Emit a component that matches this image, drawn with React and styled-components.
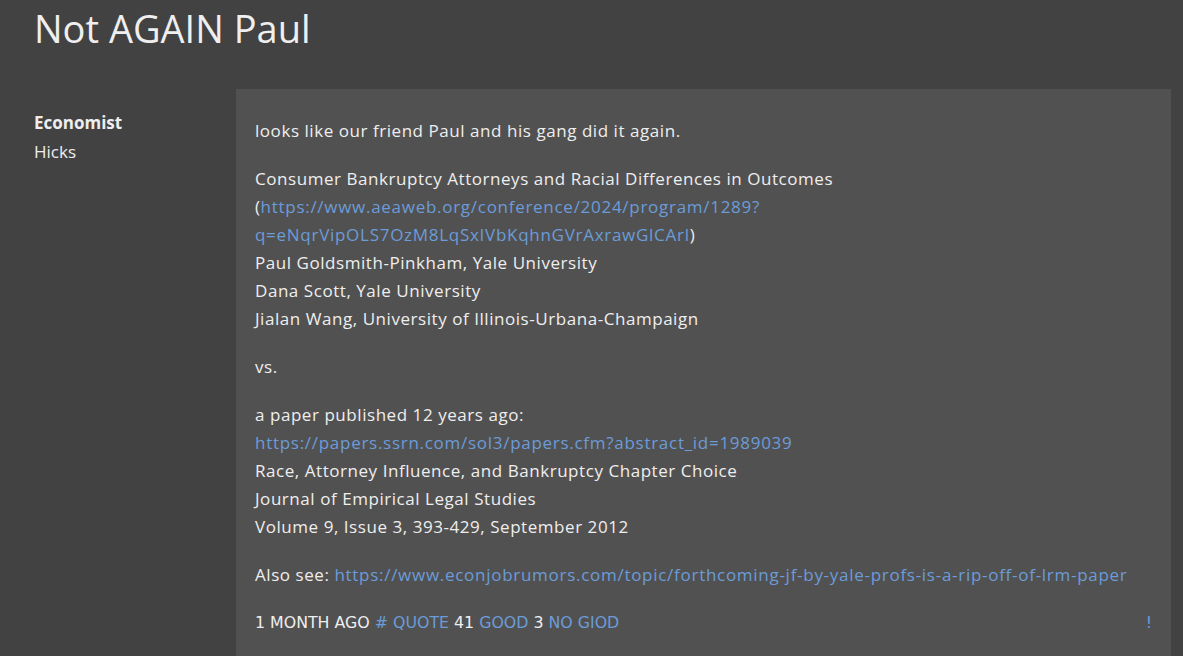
import React from 'react'
import styled, { createGlobalStyle } from 'styled-components'

const GlobalStyle = createGlobalStyle`
    html, body {
        margin: 0;
        background: #424242;
        color: #eeeeee;
        font-family: "Open Sans", Lato, sans-serif;
    }
`;

const Page = styled.div`
    padding: 0 12px 0 34px;
`;

const Title = styled.h1`
    margin: 0;
    padding: 4px 0 0;
    font-size: 38px;
    font-weight: 400;
    line-height: 48px;
    color: #efefef;
`;

const Thread = styled.div`
    display: grid;
    grid-template-columns: 202px 1fr;
    margin-top: 37px;
`;

const Author = styled.div`
    padding-top: 19px;
    font-size: 17px;
    line-height: 29px;
`;

const Name = styled.div`
    font-weight: 700;
`;

const Post = styled.div`
    background: #525151;
    padding: 28px 19px 40px 19px;
    font-size: 17px;
    line-height: 28px;
    letter-spacing: 0.55px;
`;

const Para = styled.p`
    margin: 0 0 20px;
`;

const Link = styled.a`
    color: #6b9cd8;
    text-decoration: none;
    letter-spacing: 0.72px;
`;

const Footer = styled.div`
    display: flex;
    align-items: center;
    margin-top: 3px;
    font-family: "DejaVu Sans", "Liberation Sans", sans-serif;
    font-size: 15.8px;
    line-height: 28px;
    letter-spacing: 0;
    text-transform: uppercase;
`;

const Meta = styled.span`
    margin-right: 5px;
    color: ${p => (p.$link ? '#6b9cd8' : '#eeeeee')};
`;

const Flag = styled.a`
    margin-left: auto;
    color: #6b9cd8;
    text-decoration: none;
`;

export default function App() {
    return (
        <Page>
            <GlobalStyle />
            <Title>Not AGAIN Paul</Title>
            <Thread>
                <Author>
                    <Name>Economist</Name>
                    <div>Hicks</div>
                </Author>
                <Post>
                    <Para>looks like our friend Paul and his gang did it again.</Para>
                    <Para>
                        Consumer Bankruptcy Attorneys and Racial Differences in Outcomes<br />
                        (<Link href="#">https://www.aeaweb.org/conference/2024/program/1289?<wbr />q=eNqrVipOLS7OzM8LqSxIVbKqhnGVrAxrawGlCArl</Link>)<br />
                        Paul Goldsmith-Pinkham, Yale University<br />
                        Dana Scott, Yale University<br />
                        Jialan Wang, University of Illinois-Urbana-Champaign
                    </Para>
                    <Para>vs.</Para>
                    <Para>
                        a paper published 12 years ago:<br />
                        <Link href="#">https://papers.ssrn.com/sol3/papers.cfm?abstract_id=1989039</Link><br />
                        Race, Attorney Influence, and Bankruptcy Chapter Choice<br />
                        Journal of Empirical Legal Studies<br />
                        Volume 9, Issue 3, 393-429, September 2012
                    </Para>
                    <Para>
                        Also see: <Link href="#">https://www.econjobrumors.com/topic/forthcoming-jf-by-yale-profs-is-a-rip-off-of-lrm-paper</Link>
                    </Para>
                    <Footer>
                        <Meta>1 month ago</Meta>
                        <Meta $link>#</Meta>
                        <Meta $link>quote</Meta>
                        <Meta>41</Meta>
                        <Meta $link>good</Meta>
                        <Meta>3</Meta>
                        <Meta $link>no giod</Meta>
                        <Flag href="#">!</Flag>
                    </Footer>
                </Post>
            </Thread>
        </Page>
    )
}
